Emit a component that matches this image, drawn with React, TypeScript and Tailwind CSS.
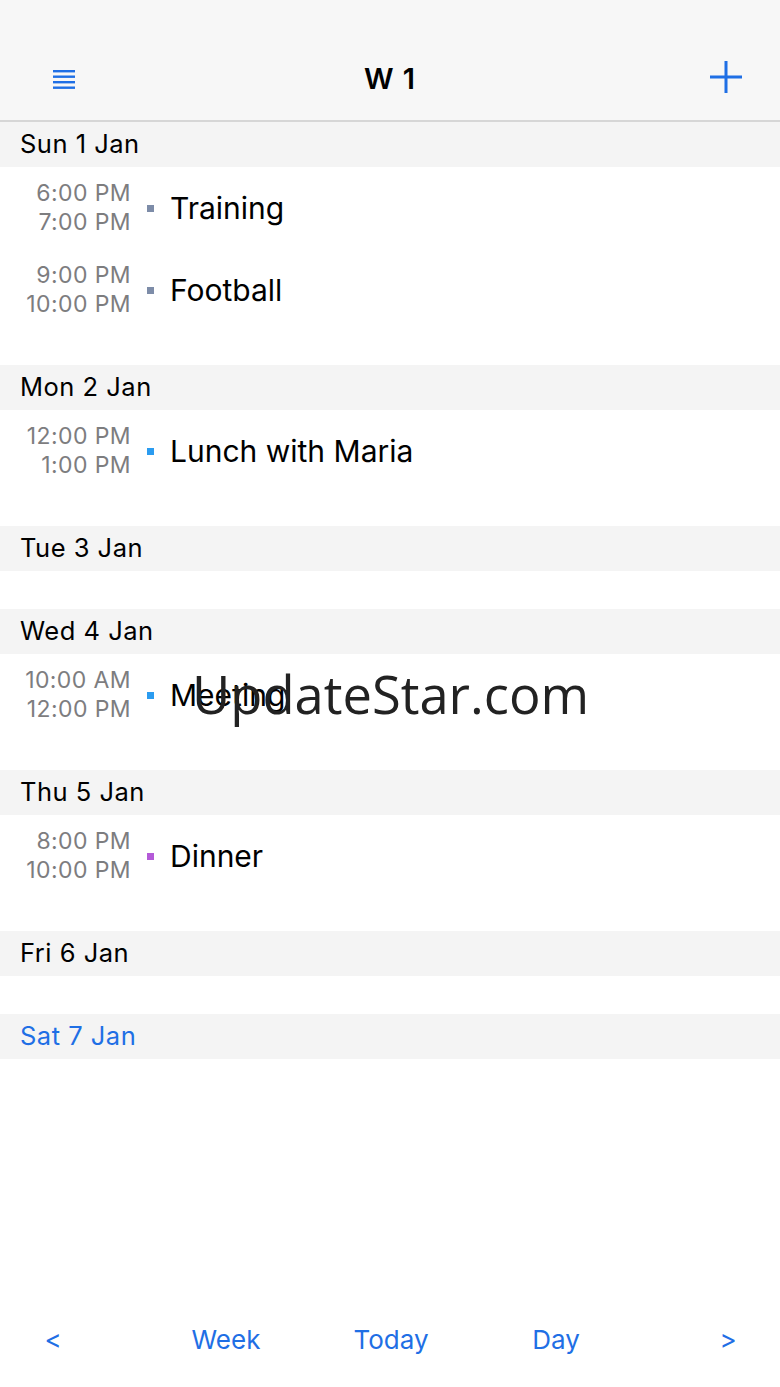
type Ev = { start: string; end: string; title: string; color: string };
type DayItem = { label: string; today?: boolean; events: Ev[] };

const days: DayItem[] = [
  {
    label: "Sun 1 Jan",
    events: [
      { start: "6:00 PM", end: "7:00 PM", title: "Training", color: "bg-[#7d8ca8]" },
      { start: "9:00 PM", end: "10:00 PM", title: "Football", color: "bg-[#7d8ca8]" },
    ],
  },
  {
    label: "Mon 2 Jan",
    events: [{ start: "12:00 PM", end: "1:00 PM", title: "Lunch with Maria", color: "bg-[#2b9cf0]" }],
  },
  { label: "Tue 3 Jan", events: [] },
  {
    label: "Wed 4 Jan",
    events: [{ start: "10:00 AM", end: "12:00 PM", title: "Meeting", color: "bg-[#2b9cf0]" }],
  },
  {
    label: "Thu 5 Jan",
    events: [{ start: "8:00 PM", end: "10:00 PM", title: "Dinner", color: "bg-[#b45ad8]" }],
  },
  { label: "Fri 6 Jan", events: [] },
  { label: "Sat 7 Jan", today: true, events: [] },
];

function Hamburger() {
  return (
    <svg width="22" height="20" viewBox="0 0 22 20" className="text-[#1f6fe5]">
      <rect x="0" y="1" width="22" height="2.4" fill="currentColor" />
      <rect x="0" y="6.5" width="22" height="2.4" fill="currentColor" />
      <rect x="0" y="12" width="22" height="2.4" fill="currentColor" />
      <rect x="0" y="17.5" width="22" height="2.4" fill="currentColor" />
    </svg>
  );
}

function PlusIcon() {
  return (
    <svg width="32" height="32" viewBox="0 0 32 32" className="text-[#1f6fe5]">
      <path d="M16 0v32M0 16h32" stroke="currentColor" strokeWidth="3" fill="none" />
    </svg>
  );
}

export default function App() {
  return (
    <div className="relative w-[780px] h-[1387px] bg-white flex flex-col font-['Inter',sans-serif] text-black">
      {/* Nav bar */}
      <div className="h-[122px] bg-[#f7f7f7] border-b-2 border-[#d6d6d6] flex items-end pb-[21px] pl-[53px] pr-[38px] shrink-0">
        <div className="w-full h-[40px] flex items-center justify-between">
          <Hamburger />
          <div className="text-[29px] font-semibold tracking-[1px] mr-[5px]">W 1</div>
          <div className="-mt-[4px]">
            <PlusIcon />
          </div>
        </div>
      </div>

      {/* Week list */}
      <div className="flex flex-col">
        {days.map((day) => (
          <div key={day.label}>
            <div className="h-[45px] bg-[#f4f4f4] flex items-center px-[20px]">
              <span className={`text-[25.5px] tracking-[0.5px] ${day.today ? "text-[#1f6fe5]" : "text-black"}`}>
                {day.label}
              </span>
            </div>
            {day.events.length === 0 ? (
              <div className="h-[38px]" />
            ) : (
              <div className="pb-[34px]">
                {day.events.map((ev) => (
                  <div key={ev.title} className="h-[82px] flex items-center">
                    <div className="w-[131px] flex flex-col items-end text-[23px] tracking-[0.4px] leading-[29px] text-[#7d7d7f]">
                      <span>{ev.start}</span>
                      <span>{ev.end}</span>
                    </div>
                    <div className={`w-[7px] h-[7px] ml-[16px] ${ev.color}`} />
                    <div className="ml-[16px] text-[30px]">{ev.title}</div>
                  </div>
                ))}
              </div>
            )}
          </div>
        ))}
      </div>

      <div className="flex-1" />

      {/* Bottom toolbar */}
      <div className="h-[90px] flex items-center pb-[6px] text-[#1f6fe5] text-[26px] shrink-0">
        <div className="w-[106px] flex justify-center">&lt;</div>
        <div className="w-[240px] flex justify-center">Week</div>
        <div className="w-[90px] flex justify-center">Today</div>
        <div className="w-[240px] flex justify-center">Day</div>
        <div className="w-[104px] flex justify-center">&gt;</div>
      </div>

      {/* Watermark overlay */}
      <div className="absolute left-[192px] top-[668px] text-[52.5px] text-[#222] font-['Open_Sans',sans-serif] leading-none">
        UpdateStar.com
      </div>
    </div>
  );
}
